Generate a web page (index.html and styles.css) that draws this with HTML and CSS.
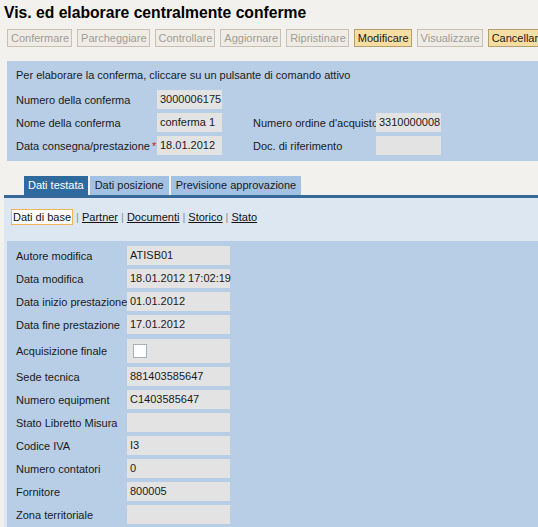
FILE: index.html
```html
<!DOCTYPE html>
<html>
<head>
<meta charset="utf-8">
<link rel="stylesheet" href="styles.css">
</head>
<body>
<h1 class="title">Vis. ed elaborare centralmente conferme</h1>
<div class="toolbar">
  <span class="btn">Confermare</span>
  <span class="btn">Parcheggiare</span>
  <span class="btn">Controllare</span>
  <span class="btn">Aggiornare</span>
  <span class="btn">Ripristinare</span>
  <span class="btn on">Modificare</span>
  <span class="btn">Visualizzare</span>
  <span class="btn on">Cancellare</span>
</div>

<div class="head-panel">
  <div class="intro">Per elaborare la conferma, cliccare su un pulsante di comando attivo</div>
  <div class="hrow">
    <span class="hlabel">Numero della conferma</span><span class="hval">3000006175</span>
  </div>
  <div class="hrow">
    <span class="hlabel">Nome della conferma</span><span class="hval">conferma 1</span>
    <span class="hlabel2">Numero ordine d'acquisto</span><span class="hval">3310000008</span>
  </div>
  <div class="hrow">
    <span class="hlabel">Data consegna/prestazione<span class="req">*</span></span><span class="hval">18.01.2012</span>
    <span class="hlabel2">Doc. di riferimento</span><span class="hval"></span>
  </div>
</div>

<div class="tabs">
  <span class="tab active">Dati testata</span>
  <span class="tab">Dati posizione</span>
  <span class="tab">Previsione approvazione</span>
</div>

<div class="tab-body">
  <div class="links">
    <span class="link current">Dati di base</span><span class="sep">|</span><span class="link">Partner</span><span class="sep">|</span><span class="link">Documenti</span><span class="sep">|</span><span class="link">Storico</span><span class="sep">|</span><span class="link">Stato</span>
  </div>
  <div class="detail">
    <div class="drow"><span class="dlabel">Autore modifica</span><span class="dval">ATISB01</span></div>
    <div class="drow"><span class="dlabel">Data modifica</span><span class="dval">18.01.2012 17:02:19</span></div>
    <div class="drow"><span class="dlabel">Data inizio prestazione</span><span class="dval">01.01.2012</span></div>
    <div class="drow"><span class="dlabel">Data fine prestazione</span><span class="dval">17.01.2012</span></div>
    <div class="drow tall"><span class="dlabel">Acquisizione finale</span><span class="dval"><span class="check"></span></span></div>
    <div class="drow"><span class="dlabel">Sede tecnica</span><span class="dval">881403585647</span></div>
    <div class="drow"><span class="dlabel">Numero equipment</span><span class="dval">C1403585647</span></div>
    <div class="drow"><span class="dlabel">Stato Libretto Misura</span><span class="dval"></span></div>
    <div class="drow"><span class="dlabel">Codice IVA</span><span class="dval">I3</span></div>
    <div class="drow"><span class="dlabel">Numero contatori</span><span class="dval">0</span></div>
    <div class="drow"><span class="dlabel">Fornitore</span><span class="dval">800005</span></div>
    <div class="drow"><span class="dlabel">Zona territoriale</span><span class="dval"></span></div>
  </div>
</div>
</body>
</html>
```

FILE: styles.css
```css
html, body {
  margin: 0;
  padding: 0;
}
body {
  background: #f3f1ee;
  font-family: "Liberation Sans", Arial, sans-serif;
  font-size: 11px;
  color: #1a1a1a;
  overflow: hidden;
  height: 527px;
}
.title {
  margin: 0;
  padding: 3px 4px 0 4px;
  height: 23px;
  font-size: 15.7px;
  font-weight: bold;
  line-height: 20px;
  color: #000;
  white-space: nowrap;
}
.toolbar {
  display: flex;
  gap: 5px;
  padding-left: 7px;
  margin-top: 3px;
  white-space: nowrap;
  overflow: hidden;
}
.btn {
  display: inline-block;
  flex: none;
  height: 16px;
  line-height: 16px;
  padding: 0 2px 0 3px;
  border: 1px solid #c8c1b3;
  background: #efece5;
  color: #9d9d98;
}
.btn.on {
  background: #f6dea2;
  border-color: #b39f6e;
  color: #1a1a1a;
}
.head-panel {
  margin: 14px 0 0 7px;
  background: #b8cee6;
  padding: 7px 9px 4px 9px;
  height: 89px;
}
.intro {
  line-height: 14px;
  margin-bottom: 6px;
}
.hrow {
  display: flex;
  align-items: center;
  height: 23px;
}
.hlabel {
  width: 141px;
  white-space: nowrap;
}
.hlabel2 {
  width: 123px;
  margin-left: 31px;
  white-space: nowrap;
}
.req {
  color: #d02020;
  margin-left: 2px;
}
.hval, .dval {
  display: inline-block;
  background: #e3e3e3;
  height: 19px;
  line-height: 19px;
  padding: 0 3px;
  box-sizing: border-box;
  white-space: nowrap;
}
.hval {
  width: 65px;
}
.tabs {
  display: flex;
  gap: 2px;
  margin-top: 15px;
  padding-left: 24px;
  height: 19px;
}
.tab {
  display: inline-block;
  height: 19px;
  line-height: 19px;
  padding: 0 5px;
  background: #a3c2e3;
  color: #1a1a1a;
  white-space: nowrap;
}
.tab.active {
  padding: 0 4px;
  background: #2f6a9f;
  color: #fff;
}
.tab-body {
  margin-left: 4px;
  border-top: 3px solid #35699a;
  background: #dde7f2;
  height: 340px;
}
.links {
  display: flex;
  align-items: center;
  height: 43px;
  padding-left: 7px;
  padding-bottom: 6px;
  box-sizing: border-box;
}
.link {
  text-decoration: underline;
  color: #111;
  line-height: 14px;
}
.link.current {
  text-decoration: none;
  background: #fff;
  border: 1px solid #efb457;
  padding: 0 1px;
  line-height: 14px;
}
.sep {
  color: #8a8f96;
  margin: 0 3px;
}
.detail {
  margin-left: 3px;
  background: #b8cee6;
  padding: 3px 0 0 9px;
  height: 300px;
}
.drow {
  display: flex;
  align-items: center;
  height: 23px;
}
.drow.tall {
  height: 29px;
}
.drow.tall .dval {
  height: 24px;
}
.dlabel {
  width: 111px;
  white-space: nowrap;
}
.dval {
  width: 103px;
  display: flex;
  align-items: center;
}
.check {
  display: inline-block;
  width: 12px;
  height: 12px;
  border: 1px solid #a9b0b8;
  background: #fff;
  margin-left: 3px;
}
```
